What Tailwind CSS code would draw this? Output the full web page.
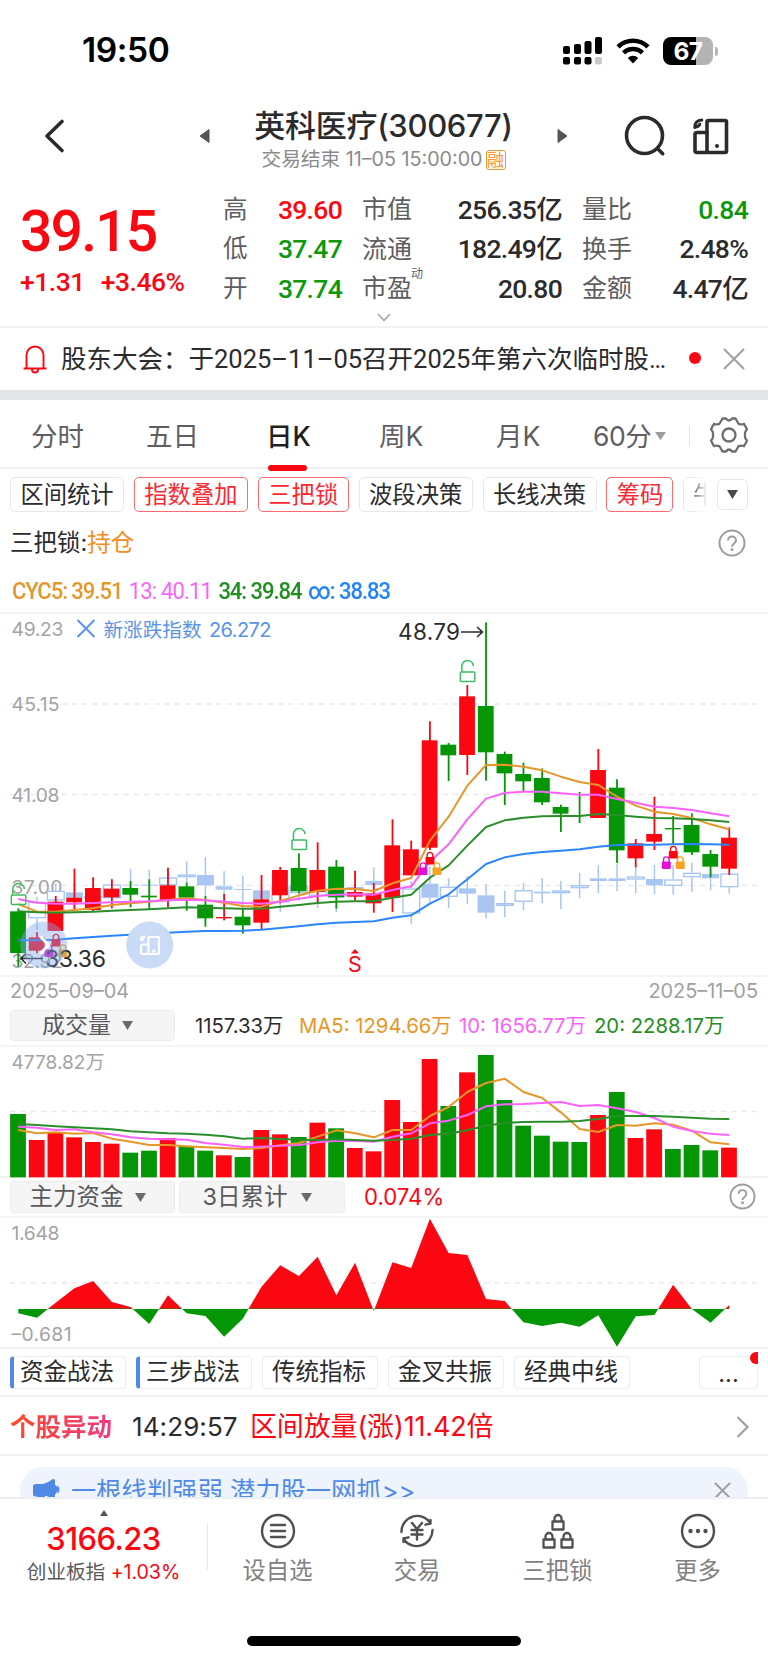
<!DOCTYPE html>
<html lang="zh-CN">
<head>
  <meta charset="UTF-8" />
  <meta name="viewport" content="width=device-width, initial-scale=1.0" />
  <title>英科医疗(300677)</title>
  <script src="https://cdn.jsdelivr.net/npm/@tailwindcss/browser@4"></script>
</head>
<body class="w-[768px] h-[1663px] overflow-hidden bg-white text-[#2b2b2e] leading-none whitespace-nowrap font-[Inter,'Noto_Sans_CJK_SC',sans-serif]">

  <!-- Status bar -->
  <div class="h-[88px] flex items-center pt-[14px] pl-[82px] pr-[50px] text-black">
    <span class="text-[33.500px] font-semibold tracking-[-0.400px]">19:50</span>
    <div class="ml-auto flex items-center gap-[13px]">
      <svg class="w-[40px] h-[28px]" viewBox="0 0 40 28">
        <rect x="0" y="9" width="7" height="8" rx="2" />
        <rect x="11" y="7" width="7" height="10" rx="2" />
        <rect x="21.500" y="4" width="7" height="13" rx="2" />
        <rect x="32" y="0" width="7" height="17" rx="2" />
        <rect x="0" y="20" width="7" height="7.500" rx="2" />
        <rect x="11" y="20" width="7" height="7.500" rx="2" />
        <rect x="21.500" y="20" width="7" height="7.500" rx="2" />
        <rect x="32" y="20" width="7" height="7.500" rx="2" fill="#c9c9c9" />
      </svg>
      <svg class="w-[34px] h-[26px]" viewBox="0 0 34 26" fill="none" stroke="#000" stroke-width="4.600">
        <path d="M2 8.800a21.500 21.500 0 0 1 30 0" />
        <path d="M7.600 14.800a13.500 13.500 0 0 1 18.800 0" />
        <path d="M17 25.500l-5.200-5.600a7.600 7.600 0 0 1 10.400 0z" fill="#000" stroke="none" />
      </svg>
      <div class="flex items-center">
        <div class="w-[50px] h-[28px] rounded-[8px] overflow-hidden bg-[linear-gradient(90deg,#000_67%,#b3b3b3_67%)] text-white text-[24.500px] font-bold flex items-center justify-center tracking-[-0.500px]">67</div>
        <div class="w-[3px] h-[9px] ml-[2px] rounded-r-full bg-[#b3b3b3]"></div>
      </div>
    </div>
  </div>

  <!-- Title bar -->
  <div class="h-[92px] flex items-center">
    <svg class="w-[24px] h-[36px] ml-[42px] mt-[3px]" viewBox="0 0 24 36" fill="none" stroke="#2b2b2e" stroke-width="3.600" stroke-linecap="round" stroke-linejoin="round"><path d="M20 3.500L5 18l15 14.500" /></svg>
    <svg class="w-[11px] h-[14px] ml-[133px] mt-[4px]" viewBox="0 0 11 14" fill="#555558" stroke="#555558" stroke-linejoin="round"><path d="M10 .500v13L1 7z" /></svg>
    <div class="w-[347px] flex flex-col items-center">
      <div class="text-[31px] font-medium tracking-[-0.300px] h-[36px] mt-[13px]">英科医疗(300677)</div>
      <div class="flex items-center mt-[3px] h-[22px] text-[19.700px] text-[#8a8a8c]">交易结束 11–05 15:00:00<span class="ml-[3px] w-[20px] h-[20px] rounded-[3px] border border-[#f59331] text-[#f59331] text-[17px] flex items-center justify-center">融</span></div>
    </div>
    <svg class="w-[11px] h-[14px] mt-[4px]" viewBox="0 0 11 14" fill="#555558" stroke="#555558" stroke-linejoin="round"><path d="M1 .500v13L10 7z" /></svg>
    <svg class="w-[42px] h-[42px] ml-[56px] mt-[4px]" viewBox="0 0 42 42" fill="none" stroke="#2b2b2e" stroke-width="3.600" stroke-linecap="round"><circle cx="20.500" cy="20.500" r="18" /><path d="M33.500 33.500l5.200 5.200" /></svg>
    <svg class="w-[36px] h-[38px] ml-[27px] mt-[5px]" viewBox="0 0 36 38" fill="none" stroke="#2b2b2e" stroke-width="3.600" stroke-linejoin="round" stroke-linecap="round">
      <rect x="14" y="2.500" width="19.500" height="32" rx="1.500" />
      <path d="M14 14.500H4q-2 0-2 2v16q0 2 2 2h10" />
      <path d="M1.800 9.500q0-7.200 7-7.500M2 9q3.500.200 4.800-2.800" stroke-width="3" />
      <circle cx="24" cy="28" r="2" fill="#2b2b2e" stroke="none" />
    </svg>
  </div>

  <!-- Quote -->
  <div class="h-[148px] border-b-2 border-[#f0f0f0] relative flex font-[Roboto,'Noto_Sans_CJK_SC',sans-serif]">
    <div class="w-[223px] pl-[20px] text-[#fa0712] font-medium">
      <div class="text-[57px] h-[57px] mt-[23px] tracking-[-1.800px]">39.15</div>
      <div class="text-[26.500px] mt-[9px] flex gap-[16px] tracking-[-0.500px]"><span>+1.31</span><span>+3.46%</span></div>
    </div>
    <div class="grid grid-cols-[119px_20px_200px_20px_166px] auto-rows-[39.500px] h-[119px] mt-[10px] text-[26.500px] font-medium tracking-[-0.700px]">
      <div class="flex items-center justify-between text-[#fa0712]"><span class="text-[24.500px] font-normal text-[#5e5e62]">高</span>39.60</div><i></i>
      <div class="flex items-center justify-between"><span class="text-[25px] font-normal text-[#5e5e62] tracking-normal">市值</span>256.35亿</div><i></i>
      <div class="flex items-center justify-between text-[#0b980b]"><span class="text-[25px] font-normal text-[#5e5e62] tracking-normal">量比</span>0.84</div>
      <div class="flex items-center justify-between text-[#0b980b]"><span class="text-[24.500px] font-normal text-[#5e5e62]">低</span>37.47</div><i></i>
      <div class="flex items-center justify-between"><span class="text-[25px] font-normal text-[#5e5e62] tracking-normal">流通</span>182.49亿</div><i></i>
      <div class="flex items-center justify-between"><span class="text-[25px] font-normal text-[#5e5e62] tracking-normal">换手</span>2.48%</div>
      <div class="flex items-center justify-between text-[#0b980b]"><span class="text-[24.500px] font-normal text-[#5e5e62]">开</span>37.74</div><i></i>
      <div class="flex items-center justify-between"><span class="text-[25px] font-normal text-[#5e5e62] tracking-normal relative">市盈<sup class="absolute left-[49px] top-[-8px] text-[12px] leading-none">动</sup></span>20.80</div><i></i>
      <div class="flex items-center justify-between"><span class="text-[25px] font-normal text-[#5e5e62] tracking-normal">金额</span>4.47亿</div>
    </div>
    <svg class="absolute left-[377px] top-[133px] w-[14px] h-[9px]" viewBox="0 0 14 9" fill="none" stroke="#a8a8a8" stroke-width="1.800"><path d="M1 1l6 6.500L13 1" /></svg>
  </div>

  <!-- Notice -->
  <div class="h-[62px] flex items-center">
    <svg class="w-[24px] h-[30px] ml-[23px] -mt-[1px]" viewBox="0 0 24 30" fill="none" stroke="#fa0712" stroke-width="1.900"><path d="M3.500 24V11a8.500 8.500 0 0 1 17 0v13M.500 24.500h23M9 25.500c0 4 6 4 6 0" /></svg>
    <div class="ml-[14px] mt-[2px] w-[613px] text-[25.500px] font-[Roboto,'Noto_Sans_CJK_SC',sans-serif]">股东大会：于2025–11–05召开2025年第六次临时股…</div>
    <span class="w-[12px] h-[12px] ml-[15px] -mt-[2px] rounded-full bg-[#fa0712]"></span>
    <svg class="w-[22px] h-[22px] ml-[22px]" viewBox="0 0 22 22" stroke="#a0a0a2" stroke-width="2"><path d="M1 1l20 20M21 1L1 21" /></svg>
  </div>
  <div class="h-[10px] bg-[#e4e5e7]"></div>

  <!-- Period tabs -->
  <div class="h-[69px] border-b-2 border-[#f0f0f0] flex items-center text-[26.500px] text-[#5e5e62] pt-[5px]">
    <span class="w-[115px] pl-[31px]">分时</span>
    <span class="w-[122px] pl-[31px]">五日</span>
    <span class="w-[104px] pl-[29px] h-[62px] flex items-center relative font-medium text-[#1f1f22]">日K<i class="absolute left-[31px] bottom-[-4px] w-[39px] h-[6px] rounded-[3px] bg-[#fa0712]"></i></span>
    <span class="w-[118px] pl-[38px]">周K</span>
    <span class="w-[134px] pl-[37px]">月K</span>
    <span class="text-[26.500px] tracking-[-0.500px]">60分</span>
    <svg class="w-[11px] h-[8px] ml-[4px]" viewBox="0 0 11 8" fill="#9a9a9c"><path d="M0 0h11L5.500 8z" /></svg>
    <i class="ml-auto w-px h-[20px] bg-[#e3e3e3]"></i>
    <svg class="w-[38px] h-[38px] ml-[20px] mr-[20px] -mt-[3px]" viewBox="0 0 38 38" fill="none" stroke="#6e6e72" stroke-width="2.300" stroke-linejoin="round">
      <path d="M12.500 2.500h3.500q3 4 6 0h3.500l3 5.300q4.500 1 5.500 0 1.500 2.500 3 5.700-2 2-2 3.500v4q0 1.500 2 3.500-1.500 3.500-3 5.700-1-1-5.500 0l-3 5.300h-3.500q-3-4-6 0h-3.500l-3-5.300q-4.500-1-5.500 0-1.500-2.500-3-5.700 2-2 2-3.500v-4q0-1.500-2-3.500 1.500-3.500 3-5.700 1 1 5.500 0z" />
      <circle cx="19" cy="19" r="6.500" />
    </svg>
  </div>

  <!-- Indicator chips -->
  <div class="h-[51px] pl-[10px] pt-[8px] flex gap-[9.900px] text-[23.300px]">
    <span class="w-[114px] h-[35px] rounded-[5px] border border-[#e8e8e8] flex items-center justify-center">区间统计</span>
    <span class="w-[114px] h-[35px] rounded-[5px] border border-[#fb6a70] text-[#fa2a33] flex items-center justify-center">指数叠加</span>
    <span class="w-[91px] h-[35px] rounded-[5px] border border-[#fb6a70] text-[#fa2a33] flex items-center justify-center">三把锁</span>
    <span class="w-[114px] h-[35px] rounded-[5px] border border-[#e8e8e8] flex items-center justify-center">波段决策</span>
    <span class="w-[114px] h-[35px] rounded-[5px] border border-[#e8e8e8] flex items-center justify-center">长线决策</span>
    <span class="w-[67px] h-[35px] rounded-[5px] border border-[#fb6a70] text-[#fa2a33] flex items-center justify-center">筹码</span>
    <span class="w-[24px] h-[35px] rounded-l-[5px] border border-r-0 border-[#e8e8e8] flex items-center pl-[9px] overflow-hidden mask-r-from-20%">牛</span>
    <span class="w-[31px] h-[31px] mt-[2px] rounded-[5px] border border-[#e8e8e8] flex items-center justify-center"><svg class="w-[11px] h-[9px]" viewBox="0 0 11 9" fill="#4a4a4d"><path d="M0 0h11L5.500 9z" /></svg></span>
  </div>

  <!-- Lock signal -->
  <div class="h-[45px] pl-[10px] pr-[22px] flex items-center text-[23.500px]">
    三把锁:<span class="text-[#f68b20]">持仓</span>
    <svg class="w-[28px] h-[28px] ml-auto" viewBox="0 0 28 28" fill="none" stroke="#9d9da0" stroke-width="2"><circle cx="14" cy="14" r="12.500" /><path d="M10 11.500c0-5.500 8-5.500 8 0 0 3-4 3-4 6.200" /><circle cx="14" cy="20.500" r=".600" /></svg>
  </div>
  <div class="h-[49px] border-b-2 border-[#f5f5f5] pt-[4px]">
    <div class="h-full pl-[13px] flex items-center gap-[7px] origin-left scale-x-[0.915] text-[24px] font-medium tracking-[-1.100px] font-[Roboto,sans-serif]">
      <span class="text-[#e59729]">CYC5: 39.51</span>
      <span class="text-[#f963f9] font-normal tracking-[-0.900px]">13: 40.11</span>
      <span class="text-[#1f8f1f]">34: 39.84</span>
      <span class="text-[#2383fb]">∞: 38.83</span>
    </div>
  </div>

  <!-- Daily K chart -->
  <svg class="block w-[768px] h-[361px]" viewBox="0 614 768 361" font-family="Inter, 'Noto Sans CJK SC', sans-serif">
    <g stroke="#eaeaea" stroke-width="1.500" stroke-dasharray="5.500 4.800">
      <path d="M10 704H757M10 794.500H757M10 885.500H757" />
    </g>
    <g fill="#a3a3a5" font-size="19.300">
      <text x="11.500" y="635.500" textLength="52">49.23</text>
      <text x="11.500" y="711" textLength="48">45.15</text>
      <text x="11.500" y="802" textLength="48">41.08</text>
      <text x="11.500" y="893.500" textLength="51">37.00</text>
      <text x="11.500" y="967.500" textLength="51">32.92</text>
    </g>
    <path d="M77.500 620l17 17M94.500 620l-17 17" stroke="#5a93e8" stroke-width="2" />
    <text x="103.500" y="637" font-size="19.600" fill="#5a93e8" textLength="98">新涨跌指数</text>
    <text x="209" y="637" font-size="20" fill="#5a93e8" textLength="62.500">26.272</text>
    <g id="overlay"></g>
    <g id="candles"></g>
    <g id="lines" fill="none" stroke-width="2" stroke-linejoin="round"></g>
    <g id="locks"></g>
    <text x="398" y="640" font-size="22.500" fill="#2b2b2e" textLength="62">48.79</text>
    <path d="M461 632h21M477 627l5.500 5-5.500 5" fill="none" stroke="#2b2b2e" stroke-width="1.600" />
    <text x="45" y="967" font-size="23" fill="#2b2b2e" textLength="61">33.36</text>
    <path d="M43 958.500H21M26 953.500l-5 5 5 5" fill="none" stroke="#2b2b2e" stroke-width="1.600" />
    <text x="348" y="972" font-size="21.500" fill="#fa0712">S</text>
    <path d="M355 949l4 4.500h-8z" fill="#fa0712" />
    <circle cx="43.700" cy="945" r="23.500" fill="#7fa9ea" fill-opacity=".42" />
    <path d="M40.500 936.500l8 8.500-8 8.500" fill="none" stroke="#fff" stroke-width="3" />
    <circle cx="149.700" cy="945" r="23.500" fill="#c9dbf7" />
    <g fill="none" stroke="#fff" stroke-width="2.200" stroke-linejoin="round">
      <rect x="148.500" y="937" width="10.500" height="17" rx="1" />
      <path d="M148.500 944.500h-6q-1.500 0-1.500 1.500v6.500q0 1.500 1.500 1.500h6M140.500 940q.500-3.500 4.500-3.700M140.500 940q2.500.200 3-1.800" />
      <circle cx="153.800" cy="951" r=".600" />
    </g>
  </svg>
  <div class="h-[35px] border-t-2 border-[#f5f5f5] px-[10px] pb-[3px] flex items-center justify-between text-[19.900px] text-[#a0a0a2]">
    <span>2025–09–04</span><span>2025–11–05</span>
  </div>

  <!-- Volume -->
  <div class="h-[37px] pl-[10px] flex border-b-2 border-[#f5f5f5] text-[20.300px]">
    <div class="w-[165px] h-[31px] rounded-[4px] bg-[#f5f5f5] border border-[#ececec] flex items-center justify-center gap-[11px] pr-[10px] text-[23px] text-[#5a5a5e]">成交量<svg class="w-[11px] h-[9px]" viewBox="0 0 11 9" fill="#6a6a6d"><path d="M0 0h11L5.500 9z" /></svg></div>
    <div class="h-[33px] flex items-center">
      <span class="w-[104px] ml-[20px]">1157.33万</span>
      <span class="w-[160px] text-[#e59729]">MA5: 1294.66万</span>
      <span class="w-[135px] text-[#f963f9]">10: 1656.77万</span>
      <span class="text-[#1f8f1f]">20: 2288.17万</span>
    </div>
  </div>
  <svg class="block w-[768px] h-[131px]" viewBox="0 1047 768 131" font-family="Inter, 'Noto Sans CJK SC', sans-serif">
    <path d="M10 1111.500H757" stroke="#eaeaea" stroke-width="1.500" stroke-dasharray="5.500 4.800" />
    <text x="11.500" y="1069" font-size="19" fill="#a3a3a5" textLength="93">4778.82万</text>
    <path d="M0 1177H768" stroke="#f2f2f2" stroke-width="2" />
    <g id="volume"></g>
    <g id="volumeLines" fill="none" stroke-width="2" stroke-linejoin="round"></g>
  </svg>

  <!-- Main capital -->
  <div class="h-[40px] pl-[10px] pr-[12px] pt-[3px] flex gap-[4px] border-b-2 border-[#f5f5f5] text-[23.500px] text-[#5a5a5e]">
    <div class="w-[165px] h-[32px] rounded-[4px] bg-[#f5f5f5] border border-[#ececec] flex items-center justify-center gap-[11px] pr-[10px]">主力资金<svg class="w-[11px] h-[9px]" viewBox="0 0 11 9" fill="#6a6a6d"><path d="M0 0h11L5.500 9z" /></svg></div>
    <div class="w-[166px] h-[32px] rounded-[4px] bg-[#f5f5f5] border border-[#ececec] flex items-center justify-center gap-[13px] pr-[10px]">3日累计<svg class="w-[11px] h-[9px]" viewBox="0 0 11 9" fill="#6a6a6d"><path d="M0 0h11L5.500 9z" /></svg></div>
    <span class="h-[32px] flex items-center ml-[15px] text-[22.200px] text-[#fa0712]">0.074%</span>
    <svg class="w-[27px] h-[27px] ml-auto mt-[2px]" viewBox="0 0 28 28" fill="none" stroke="#9d9da0" stroke-width="2"><circle cx="14" cy="14" r="12.500" /><path d="M10 11.500c0-5.500 8-5.500 8 0 0 3-4 3-4 6.200" /><circle cx="14" cy="20.500" r=".600" /></svg>
  </div>
  <svg class="block w-[768px] h-[129px]" viewBox="0 1218 768 129" font-family="Inter, sans-serif">
    <clipPath id="above"><rect x="0" y="1218" width="768" height="91.300" /></clipPath>
    <clipPath id="below"><rect x="0" y="1308.500" width="768" height="40" /></clipPath>
    <path d="M10 1282.700H757" stroke="#eaeaea" stroke-width="1.500" stroke-dasharray="5.500 4.800" />
    <text x="11.500" y="1240" font-size="19.300" fill="#a3a3a5" textLength="48">1.648</text>
    <text x="11.500" y="1340.500" font-size="19.300" fill="#a3a3a5" textLength="60">–0.681</text>
    <g id="capital"></g>
  </svg>

  <!-- Strategy tags -->
  <div class="h-[50px] border-y-2 border-[#f2f2f2] pl-[10px] pr-[10px] flex items-center gap-[10px] text-[23.500px]">
    <span class="w-[116px] h-[33px] rounded-[4px] border border-l-4 border-[#ededed] border-l-[#4f8ae6] flex items-center pl-[6px]">资金战法</span>
    <span class="w-[116px] h-[33px] rounded-[4px] border border-l-4 border-[#ededed] border-l-[#4f8ae6] flex items-center pl-[6px]">三步战法</span>
    <span class="w-[116px] h-[33px] rounded-[4px] border border-[#ededed] flex items-center pl-[9px]">传统指标</span>
    <span class="w-[116px] h-[33px] rounded-[4px] border border-[#ededed] flex items-center pl-[9px]">金叉共振</span>
    <span class="w-[116px] h-[33px] rounded-[4px] border border-[#ededed] flex items-center pl-[9px]">经典中线</span>
    <span class="relative ml-auto w-[59px] h-[33px] rounded-[4px] border border-[#ededed] flex items-center justify-center pt-[4px]">...<i class="absolute right-[-1px] top-[-5px] w-[8px] h-[12px] rounded-l-full bg-[#fa0712]"></i></span>
  </div>

  <!-- Stock alert -->
  <div class="h-[59px] border-b-2 border-[#f2f2f2] pl-[10px] pr-[19px] pt-[2px] flex items-center">
    <span class="text-[25.500px] font-bold bg-[linear-gradient(90deg,#fb4a2c,#f03a80)] bg-clip-text text-transparent h-[32px] leading-[32px]">个股异动</span>
    <span class="ml-[20px] w-[118px] text-[26px] tracking-[0.100px]">14:29:57</span>
    <span class="text-[27px] text-[#fa0712] tracking-[-0.150px]">区间放量(涨)11.42倍</span>
    <svg class="w-[13px] h-[22px] ml-auto" viewBox="0 0 13 22" fill="none" stroke="#a0a0a2" stroke-width="2.200"><path d="M1.500 1l10 10-10 10" /></svg>
  </div>

  <!-- Promo strip, cut off by the bottom bar -->
  <div class="h-[43px] pt-[11px] px-[20px] overflow-hidden border-b-2 border-[#ebeef3]">
    <div class="h-[47px] rounded-[24px] bg-[#eef3fc] flex items-center pl-[12px] pr-[17px]">
      <svg class="w-[29px] h-[30px] mt-[2px]" viewBox="0 0 29 30" fill="#4f8ae6"><path d="M1 9.500q0-2.500 2.500-2.500H11q5-1 9-4.500 3-1.500 3 1.500v3.500q5.500 4.500 0 10v3q0 3-3 1.500-3-2.500-7-3.500v7q0 2-2 2H8.500q-2 0-2.300-2l-1.200-6H3.500Q1 19.500 1 17zM25.500 8q4 4.500 0 9z" /></svg>
      <span class="ml-[10px] text-[25.300px] text-[#4f8ae6]">一根线判强弱 潜力股一网抓&gt;&gt;</span>
      <svg class="w-[17px] h-[17px] ml-auto" viewBox="0 0 17 17" stroke="#a0a0a2" stroke-width="2"><path d="M1 1l15 15M16 1L1 16" /></svg>
    </div>
  </div>

  <!-- Bottom bar -->
  <div class="h-[137px] flex pt-[11px] text-[23px] text-[#808083]">
    <div class="w-[207px] h-[80px] flex flex-col items-center">
      <svg class="w-[8px] h-[6px]" viewBox="0 0 8 6" fill="#555558"><path d="M4 0l4 6H0z" /></svg>
      <div class="mt-[7px] text-[31px] font-medium text-[#fa0712] tracking-[-0.550px]">3166.23</div>
      <div class="mt-[9px] text-[19.700px] text-[#5a5a5e] tracking-[-0.100px]">创业板指 <span class="text-[#fa0712]">+1.03%</span></div>
    </div>
    <i class="w-px h-[47px] mt-[13px] bg-[#e8e8e8]"></i>
    <div class="w-[139px] flex flex-col items-center">
      <svg class="w-[36px] h-[36px] mt-[3px]" viewBox="0 0 36 36" fill="none" stroke="#4f4f54" stroke-width="2.400" stroke-linecap="round"><circle cx="18" cy="18" r="16" /><path d="M11 12h14M11 18h14M11 24h14" /></svg>
      <span class="mt-[10px] text-[23.300px]">设自选</span>
    </div>
    <div class="w-[140px] flex flex-col items-center">
      <svg class="w-[36px] h-[36px] mt-[3px]" viewBox="0 0 36 36" fill="none" stroke="#4f4f54" stroke-width="2.400" stroke-linecap="round" stroke-linejoin="round"><path d="M2.500 19A15.800 15.800 0 0 1 31.500 10v-3M31.500 10.500l-5 1.200M33.500 17A15.800 15.800 0 0 1 4.500 26v3M4.500 25.500l5-1.200" /><path d="M13 10l5 6 5-6M18 16v10.500M12.500 17h11M12.500 21.500h11" /></svg>
      <span class="mt-[10px] text-[23.300px]">交易</span>
    </div>
    <div class="w-[141px] flex flex-col items-center">
      <svg class="w-[36px] h-[36px] mt-[3px]" viewBox="0 0 36 36" fill="none" stroke="#4f4f54" stroke-width="2.300" stroke-linejoin="round">
        <rect x="12.500" y="8.500" width="11" height="8" /><path d="M14.500 8.500V5.500a3.500 3.500 0 0 1 7 0v3" />
        <rect x="3.500" y="26.500" width="11" height="8" /><path d="M5.500 26.500v-3a3.500 3.500 0 0 1 7 0v3" />
        <rect x="21.500" y="26.500" width="11" height="8" /><path d="M23.500 26.500v-3a3.500 3.500 0 0 1 7 0v3" />
      </svg>
      <span class="mt-[10px] text-[23.300px]">三把锁</span>
    </div>
    <div class="w-[139px] flex flex-col items-center">
      <svg class="w-[36px] h-[36px] mt-[3px]" viewBox="0 0 36 36"><circle cx="18" cy="18" r="16" fill="none" stroke="#4f4f54" stroke-width="2.400" /><g fill="#4f4f54"><circle cx="10.500" cy="18" r="2.200" /><circle cx="18" cy="18" r="2.200" /><circle cx="25.500" cy="18" r="2.200" /></g></svg>
      <span class="mt-[10px] text-[23.300px]">更多</span>
    </div>
  </div>
  <div class="w-[274px] h-[10px] mx-auto rounded-full bg-black"></div>

<script>
  const RED = '#fa0712', GREEN = '#049604', BLUE = '#a9c5f1';
  const cx = i => 18.3 + i * 18.71;
  const set = (id, html) => { document.getElementById(id).innerHTML = html; };

  // colour, high, body top, body bottom, low (thirds of a pixel below y = 600)
  const candles = [
    ['g',925,934,1059,1100],['r',996,1012,1052,1060],['r',888,905,993,993],['r',806,893,907,930],
    ['r',832,864,930,934],['r',838,866,892,925],['g',843,864,884,922],['g',838,887,892,927],
    ['r',803,856,903,922],['g',848,859,893,932],['g',888,914,955,980],['r',882,951,955,961],
    ['g',925,950,976,1001],['r',825,898,968,988],['r',801,810,886,910],['g',760,804,874,880],
    ['r',727,810,876,907],['g',780,800,892,926],['r',812,876,890,902],['r',849,880,910,938],
    ['r',658,736,893,936],['r',722,748,826,826],['r',364,421,743,750],['g',429,434,466,543],
    ['r',255,289,465,525],['g',67,318,457,542],['g',455,462,520,615],['g',488,522,544,574],
    ['g',505,534,607,615],['g',614,621,641,696],['g',576,645,648,669],['r',447,510,654,654],
    ['g',538,563,751,789],['r',717,730,775,802],['r',590,702,725,750],['g',648,684,688,732],
    ['g',640,675,757,765],['g',750,762,800,832],['r',682,713,806,825]
  ];
  set('candles', candles.map(([c, h, t, b, l], i) => {
    const f = c === 'r' ? RED : GREEN;
    return `<rect x="${cx(i) - 0.9}" y="${600 + h / 3}" width="1.8" height="${(l - h) / 3}" fill="${f}"/>` +
      `<rect x="${cx(i) - 8.2}" y="${600 + t / 3}" width="15.8" height="${(b - t) / 3}" fill="${f}"/>`;
  }).join(''));

  // index overlay: position, high, top, bottom, low, filled
  const overlay = [
    [1,890,905,955,990,0],[2,850,872,902,920,0],[3,850,877,893,920,1],[4,870,888,893,930,0],
    [5,836,853,895,905,0],[6,806,854,856,890,1],[7,810,854,857,890,1],[8,815,832,856,880,0],
    [9,784,823,832,850,0],[10,772,825,856,890,1],[11,814,859,869,885,1],[12,827,867,870,930,1],
    [13,860,871,897,920,1],[14,855,860,908,936,0],[15,850,856,880,902,0],[16,860,870,888,924,0],
    [17,860,870,892,936,0],[18,855,861,868,890,1],[19,802,843,855,880,1],[21,843,865,941,972,0],
    [22,800,851,893,912,1],[23,835,860,891,924,0],[24,828,865,881,911,1],[25,852,886,938,955,1],
    [26,873,909,918,951,0],[27,849,870,906,930,0],[28,834,875,880,910,1],[29,843,871,880,928,0],
    [30,818,855,865,895,0],[31,796,835,843,880,1],[32,793,835,843,874,1],[33,800,829,839,880,0],
    [34,795,837,856,882,1],[35,795,838,858,884,0],[36,788,818,832,876,0],[37,810,822,835,871,1],
    [38,818,820,862,881,0]
  ];
  set('overlay', overlay.map(([i, h, t, b, l, f]) => {
    const x = cx(i), top = 600 + t / 3, bot = 600 + b / 3;
    return `<path d="M${x} ${600 + h / 3}V${top}M${x} ${bot}V${600 + l / 3}" stroke="${BLUE}" stroke-width="1.5"/>` +
      (f ? `<rect x="${x - 8.5}" y="${top}" width="17" height="${bot - top}" fill="${BLUE}"/>`
         : `<rect x="${x - 8.3}" y="${top + 0.7}" width="16.8" height="${Math.max(bot - top - 1.4, 1)}" fill="#fff" stroke="${BLUE}" stroke-width="1.4"/>`);
  }).join(''));

  const line = (ys, color, base) =>
    `<polyline stroke="${color}" points="${ys.map((y, i) => cx(i) + ',' + (base + y / 3)).join(' ')}"/>`;

  set('lines',
    line([912,935,935,930,925,915,910,905,900,895,900,908,918,920,903,886,872,866,867,873,850,834,722,650,557,495,494,500,511,530,546,555,590,617,635,642,654,673,688], '#e59729', 600) +
    line([897,908,911,911,909,907,905,904,901,899,901,905,909,911,905,896,888,884,883,884,870,859,785,733,658,596,579,575,575,580,584,584,597,608,620,624,630,640,649], '#fb62fb', 600) +
    line([934,937,938,937,935,932,930,928,925,922,923,925,926,926,920,915,909,905,904,904,893,884,833,796,737,681,661,653,649,648,648,642,645,650,654,655,657,661,666], '#2a8f2a', 600) +
    line([1021,1021,1019,1015,1011,1007,1004,1001,998,995,993,993,992,989,984,979,973,968,966,964,953,946,911,883,838,792,772,762,756,752,748,740,735,734,734,733,732,733,734], '#2b86fa', 600));

  const openLock = (x, y) =>
    `<g fill="none" stroke="#3dbd63" stroke-width="1.5"><rect x="${x - 7}" y="${y + 11.500}" width="14.500" height="9.500" rx="1"/><path d="M${x - 5.500} ${y + 11.500}V${y + 6}a5.600 5.600 0 0 1 11.500-.500"/></g>`;
  const lock = (x, y, c) =>
    `<rect x="${x - 4.500}" y="${y - 1}" width="9" height="7.500" rx="1" fill="${c}"/><path d="M${x - 2.800} ${y}v-2.800a2.800 2.800 0 0 1 5.600 0V${y}" fill="none" stroke="${c}" stroke-width="1.400"/>`;
  const trio = (x, y) =>
    lock(x, y, RED) + lock(x - 7, y + 10.5, '#e010d8') + lock(x + 7, y + 10.5, '#f7a325');
  set('locks', openLock(cx(0), 883.5) + openLock(cx(15), 828.5) + openLock(cx(24), 660.5) +
    trio(56, 940) + trio(430, 858) + trio(673.3, 852));

  const volume = [432,510,488,502,516,521,548,542,504,528,542,556,561,480,493,501,458,475,534,544,390,456,267,408,307,255,390,467,497,515,516,435,366,504,478,537,525,541,533];
  const volumeColors = 'grrrrrggrggrgrrgrgrrrrrgrggggggrgrrgggr';
  set('volume', volume.map((y, i) =>
    `<rect x="${cx(i) - 8.2}" y="${970 + y / 3}" width="15.8" height="${(622 - y) / 3}" fill="${volumeColors[i] === 'r' ? RED : GREEN}"/>`).join(''));
  set('volumeLines',
    line([480,490,487,491,489,506,515,525,525,529,532,534,537,534,526,519,500,481,490,502,480,480,438,411,366,339,326,366,384,427,477,486,465,467,460,464,482,517,523], '#e59729', 970) +
    line([470,473,480,478,487,493,502,506,508,509,519,524,531,530,527,525,517,512,513,515,500,490,460,452,435,409,403,402,399,396,408,405,415,426,444,470,483,491,495], '#fb62fb', 970) +
    line([462,465,469,472,475,478,484,487,490,491,494,499,506,504,507,509,510,508,510,512,510,506,495,491,481,467,459,456,455,455,453,447,438,438,438,440,443,446,447], '#2a8f2a', 970));

  // net inflow area, split at the zero line
  const capital = [430,443,398,355,333,396,411,462,376,430,438,500,446,350,286,318,260,376,278,423,277,294,146,249,255,387,393,457,468,458,470,436,530,439,435,344,417,458,405];
  const area = `M${cx(0)} 1309L` + capital.map((y, i) => cx(i) + ' ' + (1170 + y / 3)).join('L') + `L${cx(38)} 1309Z`;
  set('capital', `<path d="${area}" fill="${RED}" clip-path="url(#above)"/><path d="${area}" fill="${GREEN}" clip-path="url(#below)"/>`);
</script>
</body>
</html>
